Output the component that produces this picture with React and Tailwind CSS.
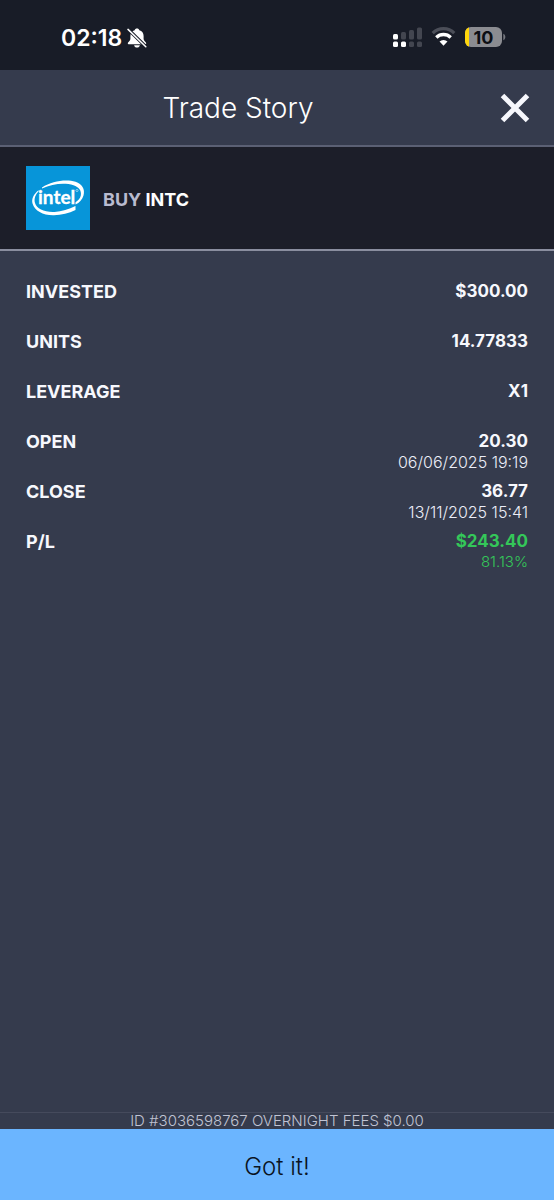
const details = [
  { label: "INVESTED", value: "$300.00" },
  { label: "UNITS", value: "14.77833" },
  { label: "LEVERAGE", value: "X1" },
  { label: "OPEN", value: "20.30", note: "06/06/2025 19:19" },
  { label: "CLOSE", value: "36.77", note: "13/11/2025 15:41" },
  { label: "P/L", value: "$243.40", note: "81.13%", gain: true },
];

function MutedBell() {
  return (
    <svg width="20" height="20" viewBox="0 0 20 20" aria-label="Silent mode">
      <path
        d="M10 .6c-1.200 0-2.100.7-2.300 1.700C4.900 3.100 3.400 5.200 3.400 8v2.800c0 1.300-.6 1.900-1.600 2.900-.8.800-1 1.100-1 1.600 0 .6.500 1 1.200 1h16c.7 0 1.200-.4 1.200-1 0-.5-.2-.8-1-1.600-1-1-1.600-1.600-1.600-2.900V8c0-2.800-1.500-4.900-4.300-5.700C12.100 1.300 11.200.6 10 .6z"
        fill="#fff"
      />
      <path d="M7.100 17.200h5.800c-.3 1.500-1.400 2.300-2.900 2.300s-2.600-.8-2.900-2.300z" fill="#fff" />
      <path d="M1 1.200l18 17.600" stroke="#181c27" strokeWidth="3.400" />
      <path d="M1 1.400l17.800 17.400" stroke="#fff" strokeWidth="1.500" strokeLinecap="round" />
    </svg>
  );
}

function Signal() {
  return (
    <svg width="29" height="20" viewBox="0 0 29 20" aria-label="Signal">
      <g fill="#fff">
        <rect x="0" y="7" width="5" height="5.500" rx="1.500" />
        <rect x="0" y="14.500" width="5" height="5.500" rx="1.500" />
        <rect x="8" y="14.500" width="5" height="5.500" rx="1.500" />
      </g>
      <g fill="#434650">
        <rect x="8" y="5" width="5" height="7.500" rx="1.500" />
        <rect x="16" y="3" width="5" height="9.500" rx="1.500" />
        <rect x="24" y="0.500" width="5" height="12" rx="1.500" />
        <rect x="16" y="14.500" width="5" height="5.500" rx="1.500" />
        <rect x="24" y="14.500" width="5" height="5.500" rx="1.500" />
      </g>
    </svg>
  );
}

function Wifi() {
  return (
    <svg width="25" height="20" viewBox="0 0 25 20" fill="none" aria-label="Wi-Fi">
      <path d="M1.700 6.100a15.500 15.500 0 0 1 21.600 0" stroke="#4b4e58" strokeWidth="3.300" />
      <path d="M5.300 10.500a10.200 10.200 0 0 1 14.400 0" stroke="#fff" strokeWidth="3.300" />
      <path d="M12.500 18.800l-4-4.200a5.800 5.800 0 0 1 8 0z" fill="#fff" />
    </svg>
  );
}

function Battery() {
  return (
    <svg width="41" height="20" viewBox="0 0 41 20" aria-label="Battery 10%">
      <defs>
        <clipPath id="shell">
          <rect width="37" height="20" rx="6" />
        </clipPath>
      </defs>
      <g clipPath="url(#shell)">
        <rect width="37" height="20" fill="#8b8c91" />
        <rect width="4" height="20" fill="#ffd60a" />
      </g>
      <path d="M38.300 6.800c1.300.4 2 1.700 2 3.200s-.7 2.800-2 3.200z" fill="#777980" />
      <text x="18.500" y="16.500" textAnchor="middle" fontFamily="Inter, sans-serif" fontSize="18" fontWeight="700" fill="#0d0f14">
        10
      </text>
    </svg>
  );
}

function IntelLogo() {
  return (
    <svg width="64" height="64" viewBox="0 0 64 64" role="img" aria-label="Intel">
      <rect width="64" height="64" fill="#0795d9" />
      <path
        d="M16 21.500C26 15 40 13 49.500 15.800c6.800 2.200 9.800 7.800 8 13.600-1.100 4-3.900 7.200-8 9.100v-2.300c2.900-1.600 4.700-3.900 5.300-6.700 1-4.900-1.900-8.500-7.300-10.300C38.500 16.400 26.500 17.600 16 22.600z"
        fill="#fff"
      />
      <path
        d="M12.500 24.200c-5 4-7.300 9.100-5.900 13.500 2.200 7 10.500 11.800 21.400 11.500 7.600-.2 14.800-2 21.500-5.200v-4c-6.700 3.200-13.700 5.500-20.900 5.900C18.500 46.400 10.700 42.800 9 37c-1.200-4.200.4-8.400 3.500-11.500z"
        fill="#fff"
      />
      <text x="12" y="38" fontFamily="Lato, sans-serif" fontSize="19" fontWeight="700" fill="#fff" stroke="#fff" strokeWidth=".3">
        intel
      </text>
      <circle cx="51" cy="24.500" r="1.100" fill="none" stroke="#fff" strokeWidth=".5" />
    </svg>
  );
}

export default function App() {
  return (
    <div className="flex min-h-screen flex-col bg-[#353b4d] font-['Inter',sans-serif] text-[#f7f8fd]">
      <div className="flex h-[70px] items-center justify-between bg-[#181c27] pt-1 pr-12 pl-[61px]">
        <div className="flex items-center gap-[5px] pt-0.5 text-white">
          <time className="text-[23px] leading-8 font-semibold">02:18</time>
          <MutedBell />
        </div>
        <div className="flex items-center gap-[9px]">
          <Signal />
          <Wifi />
          <Battery />
        </div>
      </div>

      <header className="flex h-[77px] items-center border-b-2 border-[#5b6074]">
        <h1 className="flex-1 text-center text-[28px] leading-8 font-light text-white">Trade Story</h1>
        <button type="button" aria-label="Close" className="flex w-[78px] justify-center">
          <svg width="30" height="30" viewBox="0 0 30 30" fill="none">
            <path d="M2.500 2.500l25 25M27.500 2.500L2.500 27.500" stroke="#f7f8fd" strokeWidth="5" />
          </svg>
        </button>
      </header>

      <section className="flex h-[104px] items-center gap-[13px] border-b-2 border-[#8a8e9f] bg-[#1c1e29] px-[26px]">
        <IntelLogo />
        <p className="pt-1 text-lg leading-6 font-bold text-white">
          <span className="text-[#b9bbcf]">BUY</span> INTC
        </p>
      </section>

      <main className="flex-1 px-[26px] pt-[29px]">
        <dl>
          {details.map(({ label, value, note, gain }) => (
            <div key={label} className="flex h-[50px] items-start justify-between">
              <dt className="text-lg leading-6 font-bold">{label}</dt>
              <dd className={gain ? "text-right text-[#34c759]" : "text-right"}>
                <div className="text-[17px] leading-[22px] font-bold">{value}</div>
                {note && (
                  <div className={gain ? "text-[15px] leading-5 font-light" : "text-base leading-5 font-light text-[#eceef8]"}>
                    {note}
                  </div>
                )}
              </dd>
            </div>
          ))}
        </dl>
      </main>

      <footer>
        <p className="border-t border-[#454a5c] text-center text-[15px] leading-4 font-light text-[#c0c3d3]">
          ID #3036598767 OVERNIGHT FEES $0.00
        </p>
        <button type="button" className="h-[71px] w-full bg-[#6bb5ff] pt-1 text-2xl font-light text-[#0a1322]">
          Got it!
        </button>
      </footer>
    </div>
  );
}
